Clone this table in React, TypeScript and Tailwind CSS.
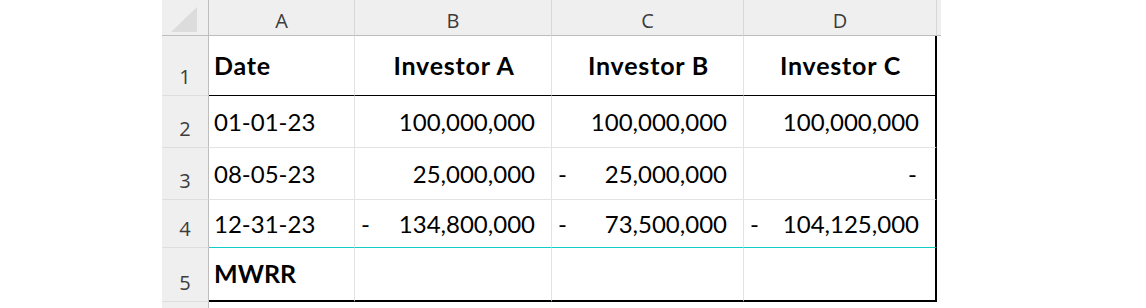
const cols = ["A", "B", "C", "D"];

type Cell = { text?: string; align?: "left" | "right" | "center"; bold?: boolean; dash?: boolean };

const rows: { n: number; h: string; cells: Cell[] }[] = [
  {
    n: 1,
    h: "h-[60px]",
    cells: [
      { text: "Date", bold: true },
      { text: "Investor A", bold: true, align: "center" },
      { text: "Investor B", bold: true, align: "center" },
      { text: "Investor C", bold: true, align: "center" },
    ],
  },
  {
    n: 2,
    h: "h-[52px]",
    cells: [
      { text: "01-01-23" },
      { text: "100,000,000", align: "right" },
      { text: "100,000,000", align: "right" },
      { text: "100,000,000", align: "right" },
    ],
  },
  {
    n: 3,
    h: "h-[52px]",
    cells: [
      { text: "08-05-23" },
      { text: "25,000,000", align: "right" },
      { text: "25,000,000", align: "right", dash: true },
      { text: "-", align: "right" },
    ],
  },
  {
    n: 4,
    h: "h-[48px]",
    cells: [
      { text: "12-31-23" },
      { text: "134,800,000", align: "right", dash: true },
      { text: "73,500,000", align: "right", dash: true },
      { text: "104,125,000", align: "right", dash: true },
    ],
  },
  {
    n: 5,
    h: "h-[54px]",
    cells: [{ text: "MWRR", bold: true }, {}, {}, {}],
  },
];

const widths = ["w-[146px]", "w-[197px]", "w-[192px]", "w-[193px]"];

function rowBorder(n: number) {
  if (n === 1) return "border-b border-b-black";
  if (n === 4) return "border-b border-b-[#12cdc6]";
  if (n === 5) return "border-b-2 border-b-black";
  return "border-b border-b-[#e3e3e3]";
}

export default function App() {
  return (
    <div className="h-[308px] w-[1146px] overflow-hidden bg-white font-['Lato',sans-serif] text-black">
      <div className="ml-[162px] flex flex-col">
        {/* Column headers */}
        <div className="flex h-[36px]">
          <div className="flex w-[47px] items-center justify-center border-r border-b border-r-[#bdbdbd] border-b-[#bdbdbd] bg-[#efefef]">
            <svg width="26" height="25" viewBox="0 0 26 25" className="ml-[-2px] mt-[4px]">
              <polygon points="26,0 26,25 0,25" fill="#dcdcdc" />
            </svg>
          </div>
          {cols.map((c, i) => (
            <div
              key={c}
              className={`${widths[i]} flex items-center justify-center border-r border-b border-r-[#d7d7d7] border-b-[#bdbdbd] bg-[#efefef] pt-[6px] font-['Open_Sans',sans-serif] text-[20px] text-[#3c3c3c]`}
            >
              {c}
            </div>
          ))}
          <div className="w-[4px] border-b border-b-[#bdbdbd] bg-[#efefef]" />
        </div>

        {/* Data rows */}
        {rows.map((r) => (
          <div key={r.n} className={`flex ${r.h}`}>
            <div className="flex w-[47px] items-end justify-center border-r border-b border-r-[#bdbdbd] border-b-[#dedede] bg-[#efefef] pb-[8px] font-['Open_Sans',sans-serif] text-[20px] leading-none text-[#3c3c3c]">
              {r.n}
            </div>
            {r.cells.map((cell, i) => (
              <div
                key={i}
                className={`${widths[i]} ${rowBorder(r.n)} flex items-center ${
                  i === 3 ? "border-r-2 border-r-black" : "border-r border-r-[#e3e3e3]"
                } ${
                  cell.align === "right"
                    ? "justify-between pr-[16px] pl-[6px]"
                    : cell.align === "center"
                      ? "justify-center pl-[2px]"
                      : "pl-[5px]"
                } ${cell.bold ? "text-[25px] font-bold" : "text-[24px] font-normal"} ${
                  r.n === 1 ? "tracking-[0.8px]" : ""
                }`}
              >
                {cell.align === "right" && <span>{cell.dash ? "-" : ""}</span>}
                {cell.text && <span className={cell.text === "-" ? "mr-[2px]" : ""}>{cell.text}</span>}
              </div>
            ))}
            <div className="w-[4px]" />
          </div>
        ))}
        <div className="flex h-[6px]">
          <div className="w-[47px] border-r border-r-[#bdbdbd] bg-[#efefef]" />
        </div>
      </div>
    </div>
  );
}
